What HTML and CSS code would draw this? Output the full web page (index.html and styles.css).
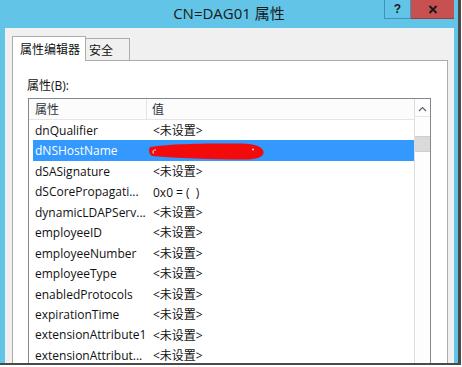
FILE: index.html
```html
<!DOCTYPE html>
<html>
<head>
<meta charset="utf-8">
<link rel="stylesheet" href="styles.css">
</head>
<body>
<div class="window">
  <div class="titlebar">
    <div class="spacer"></div>
    <div class="title">CN=DAG01 属性</div>
    <div class="controls">
      <div class="btn help">?</div>
      <div class="btn close">
        <svg width="10" height="9" viewBox="0 0 10 9"><path d="M1.5 1 L8.5 8 M8.5 1 L1.5 8" stroke="#1a1a1a" stroke-width="2"/></svg>
      </div>
    </div>
  </div>
  <div class="body">
    <div class="tabs">
      <div class="tab active">属性编辑器</div>
      <div class="tab">安全</div>
    </div>
    <div class="panel">
      <div class="label">属性(B):</div>
      <div class="listbox">
        <div class="list">
          <div class="header">
            <div class="hcol first">属性</div>
            <div class="hcol">值</div>
          </div>
          <div class="row"><span class="name">dnQualifier</span><span class="val">&lt;未设置&gt;</span></div>
          <div class="row selected"><span class="name">dNSHostName</span><span class="val"><svg class="redact" width="116" height="17" viewBox="0 0 116 17"><path d="M1 4 C18 1 55 0 92 0.5 C107 1 114 4 114.5 9 C115 14 108 16.5 96 16.5 C62 16.5 28 15 3 13 C-0.5 11 -0.5 6 1 4 Z" fill="#f30a0a"/><path d="M4.5 10.5 C3 8 5 6.5 7 7" stroke="#ffffff" stroke-width="1" fill="none"/><circle cx="104" cy="6.5" r="0.9" fill="#fff"/></svg></span></div>
          <div class="row"><span class="name">dSASignature</span><span class="val">&lt;未设置&gt;</span></div>
          <div class="row"><span class="name">dSCorePropagati...</span><span class="val">0x0 = (&nbsp;&nbsp;)</span></div>
          <div class="row"><span class="name">dynamicLDAPServ...</span><span class="val">&lt;未设置&gt;</span></div>
          <div class="row"><span class="name">employeeID</span><span class="val">&lt;未设置&gt;</span></div>
          <div class="row"><span class="name">employeeNumber</span><span class="val">&lt;未设置&gt;</span></div>
          <div class="row"><span class="name">employeeType</span><span class="val">&lt;未设置&gt;</span></div>
          <div class="row"><span class="name">enabledProtocols</span><span class="val">&lt;未设置&gt;</span></div>
          <div class="row"><span class="name">expirationTime</span><span class="val">&lt;未设置&gt;</span></div>
          <div class="row"><span class="name">extensionAttribute1</span><span class="val">&lt;未设置&gt;</span></div>
          <div class="row"><span class="name">extensionAttribut...</span><span class="val">&lt;未设置&gt;</span></div>
        </div>
        <div class="scrollbar">
          <div class="sb-up">
            <svg width="9" height="6" viewBox="0 0 9 6"><path d="M1 5 L4.5 1.5 L8 5" fill="none" stroke="#606060" stroke-width="1.2"/></svg>
          </div>
          <div class="sb-gap"></div>
          <div class="sb-thumb"></div>
        </div>
      </div>
    </div>
  </div>
</div>
</body>
</html>
```

FILE: styles.css
```css
html, body {
  margin: 0;
  padding: 0;
  background: #ffffff;
}
body {
  width: 462px;
  height: 367px;
  overflow: hidden;
  font-family: "Open Sans", "Noto Sans CJK SC", sans-serif;
  font-size: 12px;
  color: #111111;
}
.window {
  width: 458px;
  height: 363px;
  background: #62c5e8;
  border-right: 3px solid #4a4a4a;
  border-bottom: 2px solid #4a4a4a;
  display: flex;
  flex-direction: column;
  overflow: hidden;
}
.titlebar {
  height: 28px;
  flex: none;
  display: grid;
  grid-template-columns: 1fr auto 1fr;
  align-items: start;
}
.title {
  font-size: 15px;
  line-height: 20px;
  padding-top: 3px;
  color: #1a1a1a;
  white-space: nowrap;
}
.controls {
  justify-self: end;
  display: flex;
  margin-right: 4px;
}
.btn {
  height: 19px;
  box-sizing: border-box;
  display: flex;
  align-items: center;
  justify-content: center;
}
.help {
  width: 27px;
  border: 1px solid #3d94bb;
  border-top: none;
  font-weight: bold;
  font-size: 12px;
  color: #1a1a1a;
  font-family: "Liberation Sans", sans-serif;
}
.close {
  width: 43px;
  background: #c75050;
  border-bottom: 1px solid #9b3b3b;
}
.body {
  flex: 1;
  margin: 0 4px 0 5px;
  background: #f0f0f0;
  padding: 9px 6px 0 7px;
  display: flex;
  flex-direction: column;
  min-height: 0;
}
.tabs {
  display: flex;
  align-items: flex-end;
  height: 24px;
  flex: none;
  position: relative;
  z-index: 1;
  margin-bottom: -1px;
}
.tab {
  box-sizing: border-box;
  height: 22px;
  width: 45px;
  margin-left: -1px;
  border: 1px solid #acacac;
  border-bottom: none;
  background: #f0f0f0;
  line-height: 18px;
  padding-top: 3px;
  padding-left: 3px;
  margin-bottom: 1px;
}
.tab.active {
  width: 74px;
  height: 25px;
  margin-left: 0;
  margin-bottom: 0;
  background: #ffffff;
  line-height: 20px;
  padding-top: 3px;
  padding-left: 7px;
}
.panel {
  flex: 1;
  min-height: 0;
  background: #ffffff;
  border: 1px solid #acacac;
  border-bottom: none;
  padding: 15px 0 0 14px;
  overflow: hidden;
}
.label {
  line-height: 16px;
  height: 16px;
  padding-top: 2px;
  box-sizing: border-box;
}
.listbox {
  margin-top: 6px;
  margin-left: 1px;
  width: 401px;
  height: 300px;
  border: 1px solid #828790;
  border-bottom: none;
  display: flex;
}
.list {
  flex: 1;
  min-width: 0;
}
.header {
  height: 21px;
  box-sizing: border-box;
  border-bottom: 1px solid #e5e5e5;
  background: #fcfcfc;
  display: flex;
  color: #2e333b;
  line-height: 18px;
  padding-top: 2px;
}
.hcol {
  padding-left: 5px;
}
.hcol.first {
  width: 111px;
  padding-left: 6px;
  margin-top: -2px;
  padding-top: 2px;
  border-right: 1px solid #e5e5e5;
}
.row {
  height: 20.45px;
  box-sizing: border-box;
  line-height: 18px;
  padding-top: 2px;
  margin-left: 4px;
  padding-left: 2px;
  display: flex;
  white-space: nowrap;
}
.name {
  width: 118px;
  flex: none;
}
.val {
  display: flex;
  align-items: center;
}
.row.selected {
  background: #3399ff;
  color: #ffffff;
}
.redact {
  display: block;
  flex: none;
  margin-left: -4px;
  margin-top: 0;
}
.scrollbar {
  width: 15px;
  flex: none;
  border-left: 1px solid #dddddd;
  background: #fdfdfd;
  display: flex;
  flex-direction: column;
}
.sb-up {
  margin-top: 2px;
  height: 16px;
  box-sizing: border-box;
  border-bottom: 1px solid #e6e6e6;
  display: flex;
  align-items: center;
  justify-content: center;
}
.sb-gap {
  height: 19px;
}
.sb-thumb {
  height: 16px;
  background: #dadada;
  border-top: 1px solid #cfcfcf;
  border-bottom: 1px solid #cfcfcf;
  box-sizing: border-box;
}
```
